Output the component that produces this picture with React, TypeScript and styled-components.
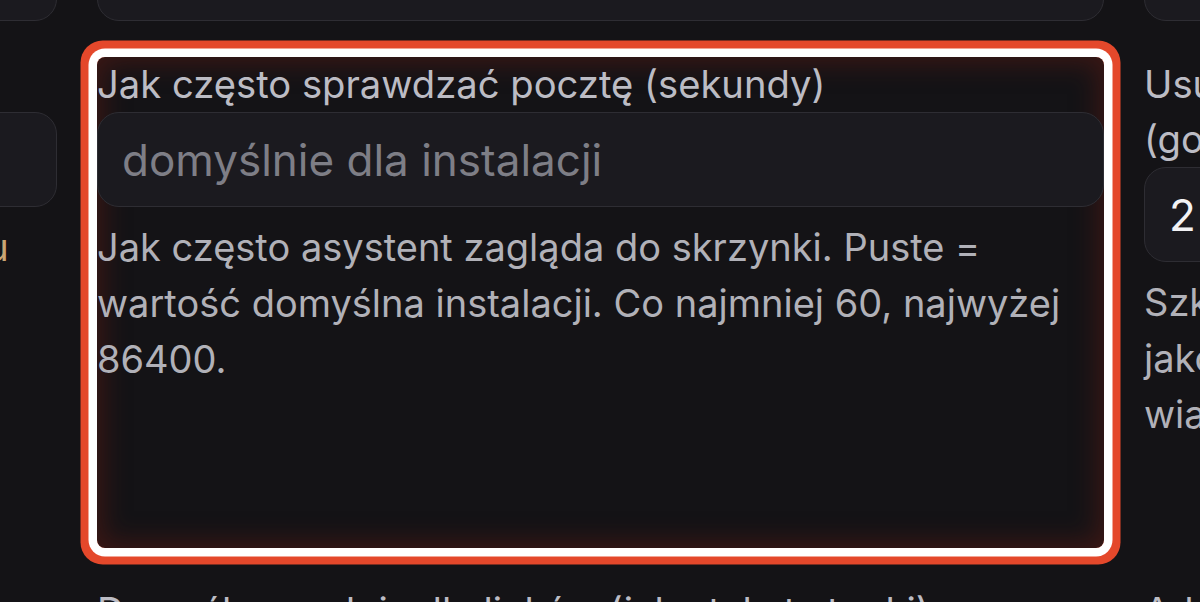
import React from "react";
import styled, { createGlobalStyle, css } from "styled-components";

const GlobalStyle = createGlobalStyle`
  html, body {
    margin: 0;
    padding: 0;
    background: #141316;
    overflow: hidden;
  }
  body {
    font-family: Inter, "Noto Sans", "Liberation Sans", sans-serif;
  }
  * { box-sizing: border-box; }
`;

const Page = styled.div`
  width: 1200px;
  height: 602px;
  overflow: hidden;
  background: #141316;
`;

const Grid = styled.div`
  display: grid;
  grid-template-columns: repeat(3, 1007px);
  grid-template-rows: 150px 491px auto;
  column-gap: 40px;
  row-gap: 36px;
  margin-left: -950px;
  margin-top: -129px;
`;

const Field = styled.div<{ $highlight?: boolean }>`
  display: flex;
  flex-direction: column;
  min-width: 0;
  ${(p) =>
    p.$highlight &&
    css`
      border-radius: 8px;
      box-shadow: inset 0 0 26px 6px rgba(100, 28, 20, 0.5),
        0 0 0 8.5px #ffffff, 0 0 0 16.5px #e4482b;
    `}
`;

const Label = styled.label`
  font-size: 38.2px;
  line-height: 55px;
  color: #bcbcc4;
  font-weight: 400;
`;

const Input = styled.input`
  height: 95px;
  width: 100%;
  border: 1.5px solid #2e2d33;
  border-radius: 22px;
  background: #1b1a1f;
  padding: 0 24px;
  font-family: inherit;
  font-size: 44px;
  color: #f2f2f4;
  outline: none;
  &::placeholder {
    color: #7e7e86;
  }
`;

const Help = styled.p<{ $tone?: "warn" }>`
  margin: 12px 0 0;
  font-size: 38px;
  line-height: 56px;
  color: ${(p) => (p.$tone === "warn" ? "#c9a574" : "#b1b1b8")};
`;

export default function App() {
  return (
    <Page>
      <GlobalStyle />
      <Grid>
        <Field>
          <Label>Serwer poczty przychodzącej</Label>
          <Input defaultValue="" />
        </Field>
        <Field>
          <Label>Adres skrzynki pocztowej</Label>
          <Input defaultValue="" />
        </Field>
        <Field>
          <Label>Hasło do skrzynki</Label>
          <Input defaultValue="" />
        </Field>

        <Field>
          <Label>Folder do monitorowania</Label>
          <Input placeholder="INBOX" />
          <Help $tone="warn">
            Folder musi istnieć na serwerze, inaczej błąd odczytu skrzynki zatrzyma synchronizację.
          </Help>
        </Field>
        <Field $highlight>
          <Label>Jak często sprawdzać pocztę (sekundy)</Label>
          <Input placeholder="domyślnie dla instalacji" />
          <Help>
            Jak często asystent zagląda do skrzynki. Puste = wartość domyślna instalacji. Co najmniej 60, najwyżej
            86400.
          </Help>
        </Field>
        <Field>
          <Label>Usuń kopie robocze odpowiedzi po upływie czasu (godziny)</Label>
          <Input defaultValue="2" />
          <Help>
            Szkice odpowiedzi starsze niż wskazany limit zostaną jako nieaktualne usunięte razem z powiązanymi
            wiadomościami.
          </Help>
        </Field>

        <Field>
          <Label>Podpis wiadomości</Label>
        </Field>
        <Field>
          <Label>Domyślny podpis dla linków (jako tekst stopki)</Label>
        </Field>
        <Field>
          <Label>Adres zwrotny</Label>
        </Field>
      </Grid>
    </Page>
  );
}
